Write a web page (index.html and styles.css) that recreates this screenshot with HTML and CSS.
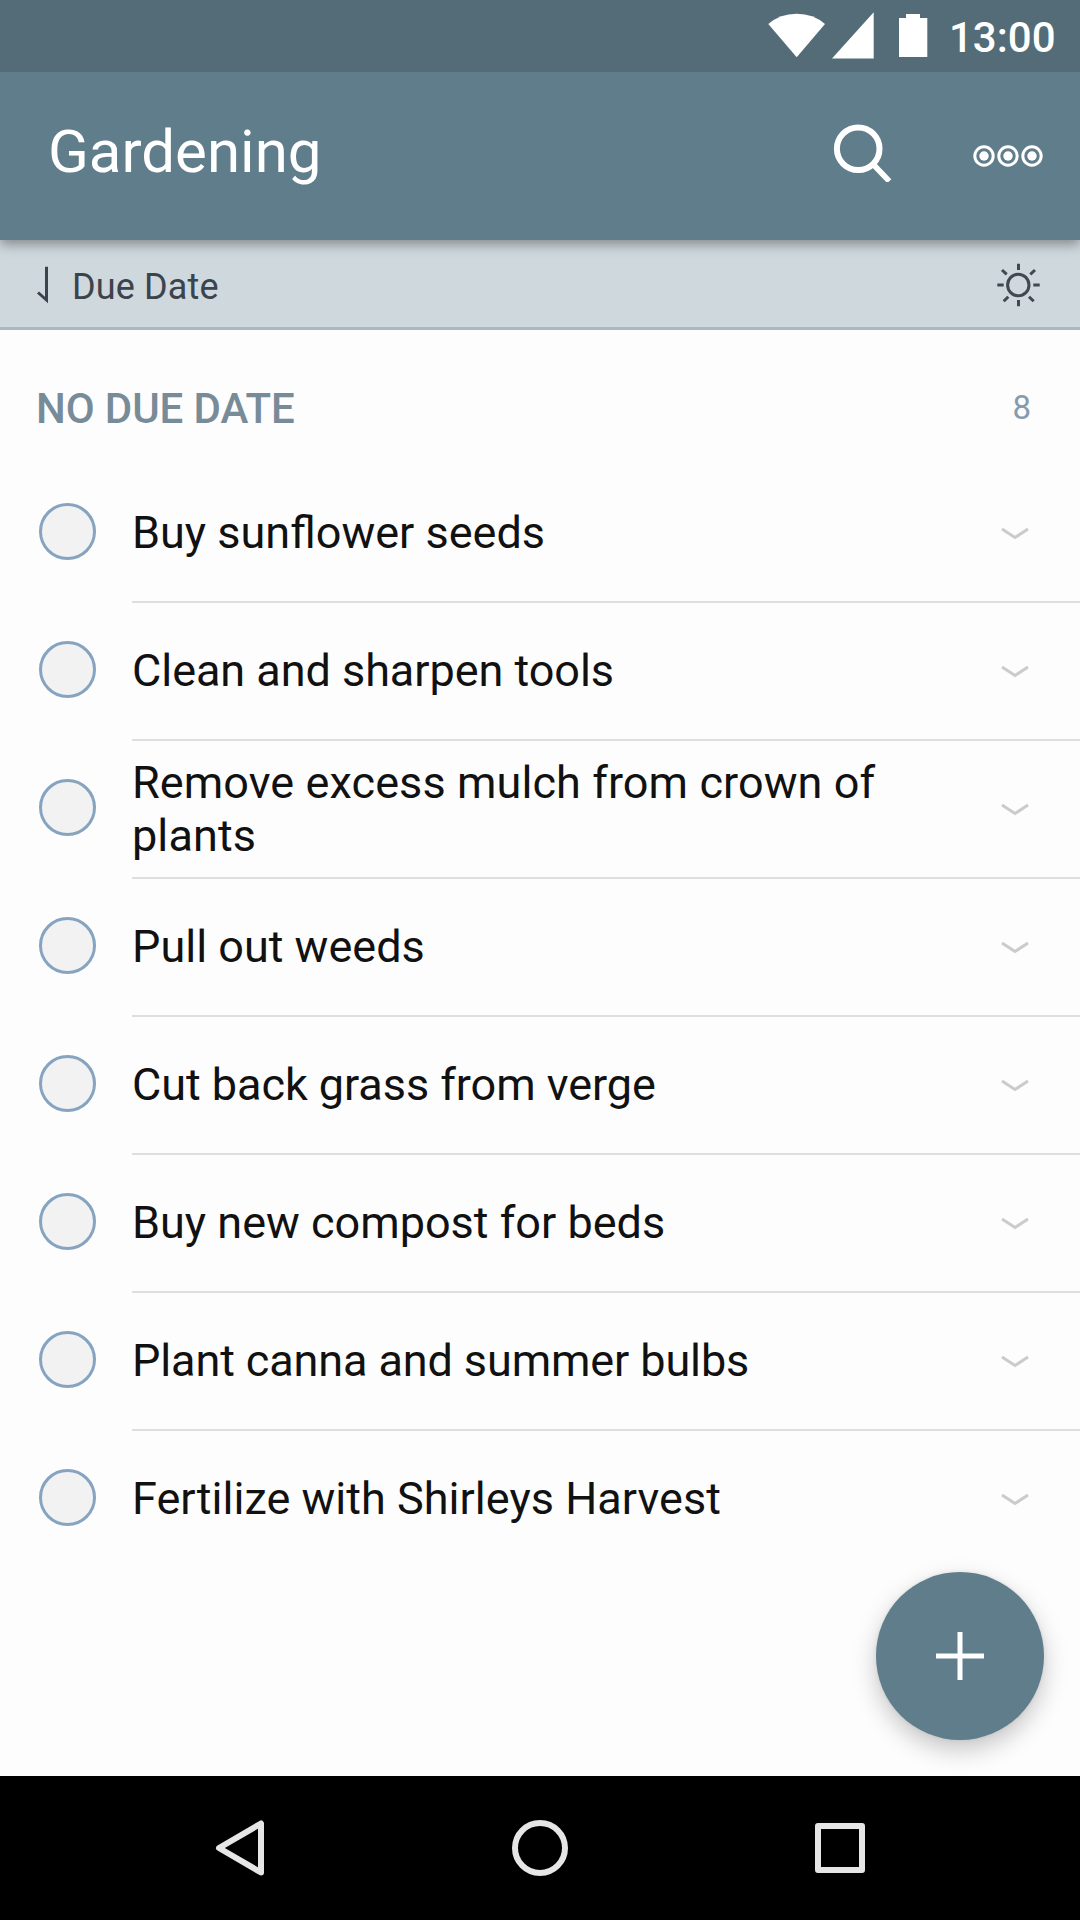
FILE: index.html
```html
<!DOCTYPE html>
<html lang="en">
<head>
<meta charset="utf-8">
<title>Gardening</title>
<link rel="stylesheet" href="styles.css">
</head>
<body>
<div class="screen">
  <div class="status-bar">
    <svg class="status-icons" width="160" height="72" viewBox="768 0 160 72" fill="#fff">
      <path d="M768.3 24Q780 13.7 796.7 13.7T825 24L796.7 57.3Z"/>
      <path d="M832 58.6H873.7V12.3Z"/>
      <path d="M899 18H906V14H920V18H927.3V57H899Z"/>
    </svg>
    <span class="clock">13:00</span>
  </div>
  <header class="app-bar">
    <h1 class="title">Gardening</h1>
    <svg class="search-icon" width="60" height="60" viewBox="832 122 60 60" fill="none" stroke="#fff">
      <circle cx="858.2" cy="148.7" r="21.3" stroke-width="6"/>
      <path d="M872.6 163.7L889.3 181.2" stroke-width="5.6"/>
    </svg>
    <svg class="more-icon" width="72" height="24" viewBox="972 144 72 24" fill="none" stroke="#fff" stroke-width="3">
      <circle cx="984" cy="156" r="9.2"/><circle cx="1008" cy="156" r="9.2"/><circle cx="1032" cy="156" r="9.2"/>
      <g fill="#fff" stroke="none"><circle cx="984" cy="156" r="4.7"/><circle cx="1008" cy="156" r="4.7"/><circle cx="1032" cy="156" r="4.7"/></g>
    </svg>
  </header>
  <div class="sort-bar">
    <svg class="sort-arrow" width="14" height="40" viewBox="36 265 14 40" fill="none" stroke="#3c434c" stroke-width="3">
      <path d="M46.5 266.7V300L38 292.5"/>
    </svg>
    <span class="sort-label">Due Date</span>
    <svg class="sun-icon" width="44" height="44" viewBox="996 263 44 44" fill="none" stroke="#414850" stroke-width="3">
      <circle cx="1018.3" cy="285" r="10.7"/>
      <path d="M1018.5 263.7V270M1018.5 300V306.2M997.3 285H1003.7M1033.3 285H1039.7M1002 270L1006.7 274.4M1035 270L1030.3 274.4M1003.7 301.3L1008.3 296.7M1033.7 301.3L1029 296.7"/>
    </svg>
  </div>
  <main class="content">
    <div class="section-head"><h2 class="section-title">NO DUE DATE</h2><span class="count">8</span></div>
    <ul class="tasks">
      <li class="task"><span class="check"></span><div class="task-body"><span class="name">Buy sunflower seeds</span><svg class="chevron" viewBox="0 0 30 14"><path d="M2 2L15 10.5L28 2"/></svg></div></li>
      <li class="task"><span class="check"></span><div class="task-body"><span class="name snug">Clean and sharpen tools</span><svg class="chevron" viewBox="0 0 30 14"><path d="M2 2L15 10.5L28 2"/></svg></div></li>
      <li class="task"><span class="check"></span><div class="task-body"><span class="name two-line">Remove excess mulch from crown of plants</span><svg class="chevron" viewBox="0 0 30 14"><path d="M2 2L15 10.5L28 2"/></svg></div></li>
      <li class="task"><span class="check"></span><div class="task-body"><span class="name">Pull out weeds</span><svg class="chevron" viewBox="0 0 30 14"><path d="M2 2L15 10.5L28 2"/></svg></div></li>
      <li class="task"><span class="check"></span><div class="task-body"><span class="name snug">Cut back grass from verge</span><svg class="chevron" viewBox="0 0 30 14"><path d="M2 2L15 10.5L28 2"/></svg></div></li>
      <li class="task"><span class="check"></span><div class="task-body"><span class="name">Buy new compost for beds</span><svg class="chevron" viewBox="0 0 30 14"><path d="M2 2L15 10.5L28 2"/></svg></div></li>
      <li class="task"><span class="check"></span><div class="task-body"><span class="name snugger">Plant canna and summer bulbs</span><svg class="chevron" viewBox="0 0 30 14"><path d="M2 2L15 10.5L28 2"/></svg></div></li>
      <li class="task"><span class="check"></span><div class="task-body"><span class="name loose">Fertilize with Shirleys Harvest</span><svg class="chevron" viewBox="0 0 30 14"><path d="M2 2L15 10.5L28 2"/></svg></div></li>
    </ul>
    <div class="fab"><svg width="48" height="48" viewBox="0 0 48 48" stroke="#fff" stroke-width="5"><path d="M24 0V48M0 24H48"/></svg></div>
  </main>
  <nav class="nav-bar">
    <svg width="60" height="60" viewBox="210 1818 60 60"><path d="M261 1823.5V1872.5L219 1848Z"/></svg>
    <svg width="60" height="60" viewBox="510 1818 60 60"><circle cx="540" cy="1848" r="25"/></svg>
    <svg width="60" height="60" viewBox="810 1818 60 60"><rect x="818" y="1826" width="44" height="44"/></svg>
  </nav>
</div>
</body>
</html>
```
FILE: styles.css
```css
* { box-sizing: border-box; }
body { margin: 0; font-family: Roboto, sans-serif; }
svg { display: block; flex: none; }
h1, h2, ul { margin: 0; padding: 0; }

.screen {
  width: 1080px;
  height: 1920px;
  display: flex;
  flex-direction: column;
  background: #fdfdfd;
  overflow: hidden;
}

.status-bar {
  height: 72px;
  flex: none;
  display: flex;
  align-items: center;
  justify-content: flex-end;
  padding-right: 25px;
  background: #536c77;
  z-index: 2;
}
.status-icons { margin-right: 21px; }
.clock {
  width: 106px;
  padding-top: 3px;
  font-size: 42px;
  line-height: 50px;
  font-weight: 500;
  color: #fff;
  white-space: nowrap;
}

.app-bar {
  height: 168px;
  flex: none;
  display: flex;
  padding: 0 36px 0 48px;
  background: #607d8b;
  box-shadow: 0 4px 12px rgba(0, 0, 0, .38);
  z-index: 1;
}
.title {
  flex: 1;
  padding-top: 45px;
  font-size: 60px;
  line-height: 70px;
  font-weight: 400;
  color: #fff;
}
.search-icon { margin: 50px 80px 0 0; }
.more-icon { margin-top: 72px; }

.sort-bar {
  height: 90px;
  flex: none;
  display: flex;
  align-items: flex-start;
  padding: 0 40px 0 36px;
  background: #cfd8dd;
  border-bottom: 3px solid #abb8c2;
}
.sort-arrow { margin-top: 25px; }
.sort-label {
  flex: 1;
  margin: 26px 0 0 22px;
  font-size: 36px;
  line-height: 42px;
  letter-spacing: .15px;
  color: #3c434c;
}
.sun-icon { margin-top: 23px; }

.content { flex: 1; position: relative; }
.section-head {
  height: 135px;
  display: flex;
  justify-content: space-between;
  padding: 0 49px 0 36px;
}
.section-title {
  padding-top: 54px;
  font-size: 42px;
  line-height: 50px;
  font-weight: 500;
  letter-spacing: -.1px;
  color: #788b99;
}
.count {
  padding-top: 58px;
  font-size: 33px;
  line-height: 40px;
  color: #869bb0;
}

.tasks { list-style: none; }
.task { height: 138px; display: flex; padding-left: 39px; }
.check {
  width: 57px;
  height: 57px;
  flex: none;
  margin: 38px 36px 0 0;
  border: 3px solid #86a3c0;
  border-radius: 50%;
  background: #f2f2f2;
}
.task-body {
  flex: 1;
  display: flex;
  align-items: center;
  padding-right: 50px;
  border-bottom: 2px solid #dddee2;
}
.task:last-child .task-body { border-bottom-color: transparent; }
.name {
  flex: 1;
  padding: 0 90px 2px 0;
  font-size: 45px;
  line-height: 53px;
  color: #111;
}
.two-line { padding-bottom: 0; letter-spacing: .09px; }
.snug { letter-spacing: -.05px; }
.snugger { letter-spacing: -.12px; }
.loose { letter-spacing: .03px; }
.chevron {
  width: 30px;
  height: 14px;
  margin-top: 2px;
  fill: none;
  stroke: #cbcbcb;
  stroke-width: 3;
}

.fab {
  position: absolute;
  right: 36px;
  bottom: 36px;
  width: 168px;
  height: 168px;
  display: grid;
  place-items: center;
  border-radius: 50%;
  background: #607d8b;
  box-shadow: 0 10px 24px rgba(0, 0, 0, .22), 0 0 4px rgba(0, 0, 0, .08);
}

.nav-bar {
  position: relative;
  height: 144px;
  flex: none;
  display: flex;
  align-items: center;
  justify-content: center;
  gap: 240px;
  background: #000;
}
.nav-bar svg {
  fill: none;
  stroke: #e6e6e6;
  stroke-width: 6;
  stroke-linejoin: round;
}
```
